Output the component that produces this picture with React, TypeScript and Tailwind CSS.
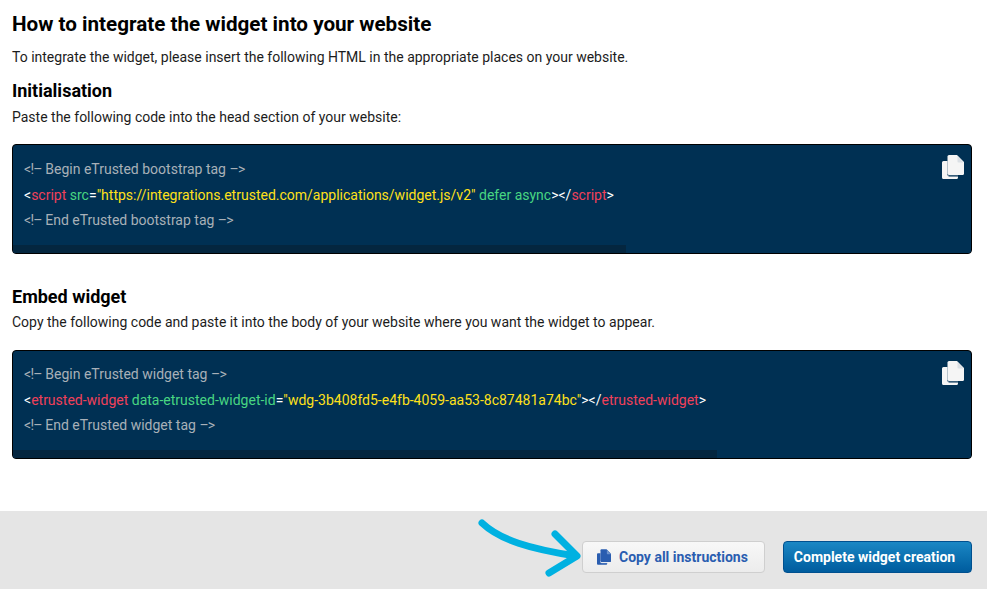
import React from "react";

function CopyIcon({ className, color, gap, fold }: { className?: string; color: string; gap: string; fold: string }) {
  return (
    <svg viewBox="0 0 22 24" className={className}>
      <path d="M1.500 6H5.500V19.500A2 2 0 0 0 7.500 21.500H16V22.500A1.500 1.500 0 0 1 14.500 24H1.500A1.500 1.500 0 0 1 0 22.500V7.500A1.500 1.500 0 0 1 1.500 6Z" fill={color} />
      <path d="M7 0H15L22 7V18.500A1.500 1.500 0 0 1 20.500 20H7A1.500 1.500 0 0 1 5.500 18.500V1.500A1.500 1.500 0 0 1 7 0Z" fill={color} />
      <path d="M5.500 19A2 2 0 0 0 7.500 21H16" stroke={gap} strokeWidth="1" fill="none" />
      <path d="M15.500 1L21.500 7.500H16.500A1 1 0 0 1 15.500 6.500Z" fill={fold} />
    </svg>
  );
}

function CodeBox({ children, thumb, compact }: { children: React.ReactNode; thumb: string; compact?: boolean }) {
  return (
    <div className="relative border border-black rounded-[4px] bg-[#003053] overflow-hidden">
      <div className={compact ? "pt-[11px] pl-[11px] text-[14px] leading-[25.500px] text-[#a8b0b8] whitespace-nowrap h-[99px]" : "pt-[12px] pl-[11px] text-[14px] leading-[25.500px] text-[#a8b0b8] whitespace-nowrap h-[100px]"}>{children}</div>
      <div className="h-[8px] bg-[#003053]">
        <div className={`h-full bg-[#04263f] ${thumb}`} />
      </div>
      <CopyIcon className="absolute right-[7px] top-[10px] w-[22px] h-[24px]" color="#f5f5f5" gap="#6f8aa0" fold="#dbe0e5" />
    </div>
  );
}

const W = ({ children }: { children: React.ReactNode }) => <span className="text-white">{children}</span>;
const R = ({ children }: { children: React.ReactNode }) => <span className="text-[#f0405a]">{children}</span>;
const G = ({ children }: { children: React.ReactNode }) => <span className="text-[#48d682]">{children}</span>;
const Y = ({ children }: { children: React.ReactNode }) => <span className="text-[#ffe01a]">{children}</span>;
const Open = () => <span className="tracking-[-0.700px]">&lt;!–</span>;
const Close = () => <span className="tracking-[-0.700px]">–&gt;</span>;

export default function App() {
  return (
    <div className="w-[987px] h-[589px] bg-white flex flex-col font-['Roboto',sans-serif] text-[#000000] overflow-hidden relative">
      <div className="flex-1 pr-[15px] pl-[12px] pt-[12px]">
        <h1 className="text-[20.650px] leading-[24px] font-bold">How to integrate the widget into your website</h1>
        <p className="text-[14px] leading-[20px] mt-[11px] text-[#1c1c1c]">To integrate the widget, please insert the following HTML in the appropriate places on your website.</p>
        <h2 className="text-[18px] leading-[22px] font-bold mt-[13px]">Initialisation</h2>
        <p className="text-[14px] leading-[20px] mt-[5px] text-[#1c1c1c]">Paste the following code into the head section of your website:</p>
        <div className="mt-[17px]">
          <CodeBox thumb="w-[613px]">
            <div><Open /> Begin eTrusted bootstrap tag <Close /></div>
            <div>
              <W>&lt;</W><R>script</R> <G>src</G><W>=</W><Y>"https://integrations.etrusted.com/applications/widget.js/v2"</Y> <G>defer async</G><W>&gt;&lt;/</W><R>script</R><W>&gt;</W>
            </div>
            <div><Open /> End eTrusted bootstrap tag <Close /></div>
          </CodeBox>
        </div>
        <h2 className="text-[18px] leading-[22px] font-bold mt-[32px]">Embed widget</h2>
        <p className="text-[14px] leading-[20px] mt-[4px] text-[#1c1c1c]">Copy the following code and paste it into the body of your website where you want the widget to appear.</p>
        <div className="mt-[18px]">
          <CodeBox thumb="w-[704px]" compact>
            <div><Open /> Begin eTrusted widget tag <Close /></div>
            <div>
              <W>&lt;</W><R>etrusted-widget</R> <G>data-etrusted-widget-id</G><W>=</W><Y>"wdg-3b408fd5-e4fb-4059-aa53-8c87481a74bc"</Y><W>&gt;&lt;/</W><R>etrusted-widget</R><W>&gt;</W>
            </div>
            <div><Open /> End eTrusted widget tag <Close /></div>
          </CodeBox>
        </div>
      </div>
      <div className="h-[78px] bg-[#e5e5e5] flex items-start justify-end gap-[18px] px-[15px] pt-[30px]">
        <button className="h-[32px] w-[183px] rounded-[4px] border border-[#cfcfcf] bg-gradient-to-b from-[#f8f8f8] to-[#ececec] flex items-center pl-[14px] gap-[8px] text-[14px] font-bold text-[#2a5db0]">
          <CopyIcon className="w-[14px] h-[16px]" color="#2a5db0" gap="#dfe5f0" fold="#6f93cc" />
          Copy all instructions
        </button>
        <button className="h-[32px] w-[189px] rounded-[4px] border border-[#00508f] bg-gradient-to-b from-[#1a87c4] to-[#005c9e] text-[14px] font-bold text-white pr-[6px]">
          Complete widget creation
        </button>
      </div>
      <svg className="absolute left-[470px] top-[510px] w-[130px] h-[75px]" viewBox="0 0 130 75" fill="none">
        <path d="M12 13C30 30 60 39 106 46" stroke="#00b1e1" strokeWidth="7" strokeLinecap="round" />
        <path d="M85 24L107 46L79 63" stroke="#00b1e1" strokeWidth="7" strokeLinecap="round" strokeLinejoin="round" />
      </svg>
    </div>
  );
}
